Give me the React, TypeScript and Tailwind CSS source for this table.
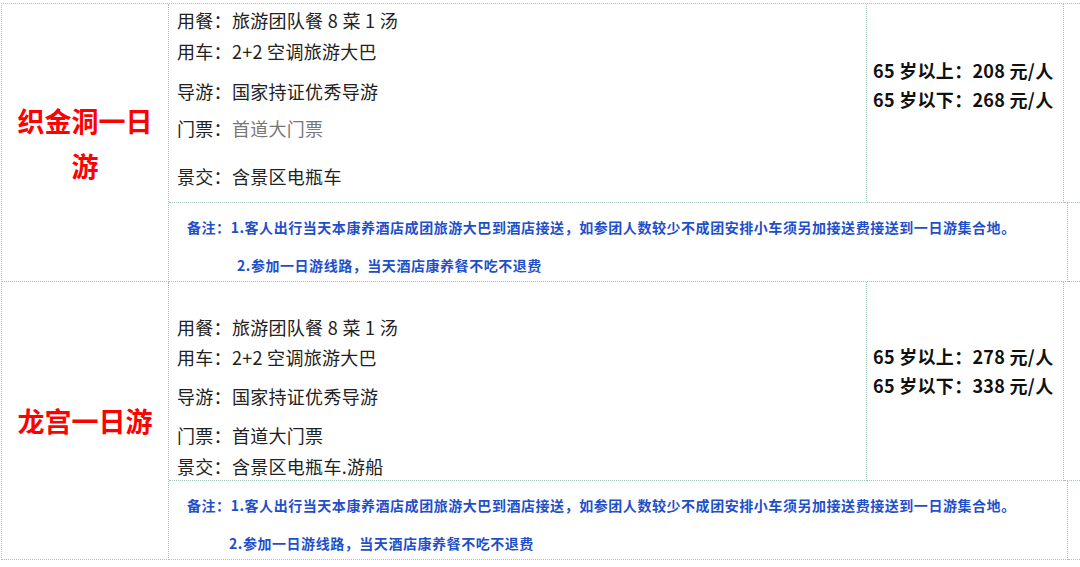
const font = "font-['Microsoft_YaHei','Noto_Sans_CJK_SC',sans-serif]";

type Line = { label: string; value: string; mt: string; muted?: boolean };

interface TourProps {
  title: React.ReactNode;
  lines: Line[];
  detailPad: string;
  pricePad: string;
  prices: string[];
  notePad2: string;
}

function Tour({ title, lines, detailPad, pricePad, prices, notePad2 }: TourProps) {
  return (
    <div className="flex">
      {/* Title cell spans both rows */}
      <div className="w-[167px] shrink-0 flex items-center justify-center border-r border-b border-dotted border-[#9fc4b8] text-center text-[27px] leading-[45px] font-bold text-[#ff0000]">
        {title}
      </div>
      <div className="flex flex-col">
        <div className="flex h-[199px]">
          <div className={`w-[698px] shrink-0 border-r border-b border-dotted border-[#9fc4b8] pl-[8px] ${detailPad}`}>
            {lines.map((l) => (
              <div key={l.label} className={`text-[18px] leading-[30px] tracking-[0.3px] text-[#222] ${l.mt}`}>
                {l.label}：<span className={l.muted ? 'text-[#777]' : ''}>{l.value}</span>
              </div>
            ))}
          </div>
          <div className={`w-[197px] shrink-0 border-r border-b border-dotted border-[#9fc4b8] pl-[6px] ${pricePad}`}>
            {prices.map((p) => (
              <div key={p} className="text-[18px] leading-[29px] tracking-[0.3px] font-bold text-[#111]">
                {p}
              </div>
            ))}
          </div>
          <div className="w-[20px] shrink-0 border-b border-dotted border-[#9fc4b8]" />
        </div>
        <div className="flex h-[79px]">
          <div className="w-[899px] shrink-0 border-r border-b border-dotted border-[#9fc4b8] text-[14px] font-bold tracking-[0.55px] text-[#1f4fc9] leading-[20px]">
            <div className="pl-[18px] pt-[14px]">
              备注：1.客人出行当天本康养酒店成团旅游大巴到酒店接送，如参团人数较少不成团安排小车须另加接送费接送到一日游集合地。
            </div>
            <div className={`pt-[18px] ${notePad2}`}>2.参加一日游线路，当天酒店康养餐不吃不退费</div>
          </div>
          <div className="w-[20px] shrink-0 border-b border-dotted border-[#9fc4b8]" />
        </div>
      </div>
    </div>
  );
}

export default function App() {
  return (
    <div className={`w-[1080px] h-[567px] overflow-hidden bg-white pt-[3px] ${font}`}>
      <div className="ml-[1px] border-t border-l border-dotted border-[#9fc4b8]">
        <Tour
          title={
            <span>
              织金洞一日
              <br />
              游
            </span>
          }
          detailPad="pt-[1px]"
          lines={[
            { label: '用餐', value: '旅游团队餐 8 菜 1 汤', mt: '' },
            { label: '用车', value: '2+2 空调旅游大巴', mt: 'mt-[1px]' },
            { label: '导游', value: '国家持证优秀导游', mt: 'mt-[10px]' },
            { label: '门票', value: '首道大门票', mt: 'mt-[7px]', muted: true },
            { label: '景交', value: '含景区电瓶车', mt: 'mt-[18px]' },
          ]}
          pricePad="pt-[52px]"
          prices={['65 岁以上：208 元/人', '65 岁以下：268 元/人']}
          notePad2="pl-[68px]"
        />
        <Tour
          title="龙宫一日游"
          detailPad="pt-[30px]"
          lines={[
            { label: '用餐', value: '旅游团队餐 8 菜 1 汤', mt: '' },
            { label: '用车', value: '2+2 空调旅游大巴', mt: '' },
            { label: '导游', value: '国家持证优秀导游', mt: 'mt-[9px]' },
            { label: '门票', value: '首道大门票', mt: 'mt-[9px]' },
            { label: '景交', value: '含景区电瓶车.游船', mt: 'mt-[1px]' },
          ]}
          pricePad="pt-[60px]"
          prices={['65 岁以上：278 元/人', '65 岁以下：338 元/人']}
          notePad2="pl-[60px]"
        />
      </div>
    </div>
  );
}
